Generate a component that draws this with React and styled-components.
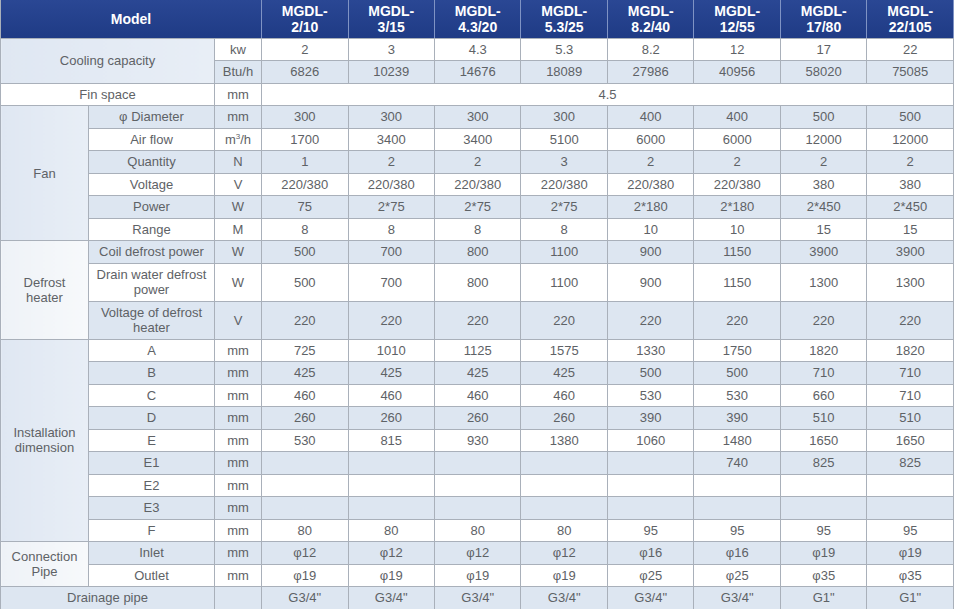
import React from "react";
import styled, { createGlobalStyle } from "styled-components";

// STYLED COMPONENTS -start

const Global = createGlobalStyle`
  html, body {
    margin: 0;
    padding: 0;
    background: #ffffff;
  }
`;

const Sheet = styled.table`
  width: 954px;
  table-layout: fixed;
  border-collapse: collapse;
  font-family: "Liberation Sans", Arial, sans-serif;
  font-size: 13px;
  color: #5e6266;
  text-align: center;
`;

const HeadRow = styled.tr`
  height: 38px;
  background: linear-gradient(#2a4794, #1f3b85);
`;

const HeadCell = styled.th`
  padding: 0;
  color: #ffffff;
  font-size: 14px;
  font-weight: bold;
  line-height: 16px;
  border: 1px solid #a9b0ba;
  border-top: none;
  border-left-color: #7f93c4;
  border-right-color: #7f93c4;
  &:first-child {
    border-left-color: #a9b0ba;
  }
`;

const Row = styled.tr`
  height: ${(p) => (p.$tall ? "38px" : "22.5px")};
  background: ${(p) => (p.$shade ? "#dde6f1" : "#ffffff")};
`;

const Cell = styled.td`
  padding: 0 2px;
  line-height: 15px;
  border: 1px solid #a9b0ba;
  sup {
    font-size: 8px;
    line-height: 0;
    vertical-align: 5px;
  }
`;

const GroupCell = styled(Cell)`
  background: ${(p) =>
    p.$tone === "light"
      ? "linear-gradient(90deg, #eef2f7, #f7f9fb)"
      : "linear-gradient(90deg, #dfe7f2, #e8eef6)"};
`;

// STYLED COMPONENTS -end

const models = ["2/10", "3/15", "4.3/20", "5.3/25", "8.2/40", "12/55", "17/80", "22/105"];

const rep = (v, n = 8) => Array(n).fill(v);

const rows = [
  { group: { text: "Cooling capacity", span: 2, cols: 2 }, unit: "kw", values: [2, 3, 4.3, 5.3, 8.2, 12, 17, 22] },
  { unit: "Btu/h", values: [6826, 10239, 14676, 18089, 27986, 40956, 58020, 75085] },
  { wide: "Fin space", unit: "mm", single: "4.5" },
  { group: { text: "Fan", span: 6 }, label: "φ Diameter", unit: "mm", values: [300, 300, 300, 300, 400, 400, 500, 500] },
  { label: "Air flow", unit: <>m<sup>3</sup>/h</>, values: [1700, 3400, 3400, 5100, 6000, 6000, 12000, 12000] },
  { label: "Quantity", unit: "N", values: [1, 2, 2, 3, 2, 2, 2, 2] },
  { label: "Voltage", unit: "V", values: [...rep("220/380", 6), 380, 380] },
  { label: "Power", unit: "W", values: [75, "2*75", "2*75", "2*75", "2*180", "2*180", "2*450", "2*450"] },
  { label: "Range", unit: "M", values: [8, 8, 8, 8, 10, 10, 15, 15] },
  { group: { text: <>Defrost<br />heater</>, span: 3, tone: "light" }, label: "Coil defrost power", unit: "W", values: [500, 700, 800, 1100, 900, 1150, 3900, 3900] },
  { label: <>Drain water defrost<br />power</>, unit: "W", tall: true, values: [500, 700, 800, 1100, 900, 1150, 1300, 1300] },
  { label: <>Voltage of defrost<br />heater</>, unit: "V", tall: true, values: rep(220) },
  { group: { text: <>Installation<br />dimension</>, span: 9 }, label: "A", unit: "mm", values: [725, 1010, 1125, 1575, 1330, 1750, 1820, 1820] },
  { label: "B", unit: "mm", values: [425, 425, 425, 425, 500, 500, 710, 710] },
  { label: "C", unit: "mm", values: [460, 460, 460, 460, 530, 530, 660, 710] },
  { label: "D", unit: "mm", values: [260, 260, 260, 260, 390, 390, 510, 510] },
  { label: "E", unit: "mm", values: [530, 815, 930, 1380, 1060, 1480, 1650, 1650] },
  { label: "E1", unit: "mm", values: ["", "", "", "", "", 740, 825, 825] },
  { label: "E2", unit: "mm", values: rep("") },
  { label: "E3", unit: "mm", values: rep("") },
  { label: "F", unit: "mm", values: [80, 80, 80, 80, 95, 95, 95, 95] },
  { group: { text: <>Connection<br />Pipe</>, span: 2, tone: "light" }, label: "Inlet", unit: "mm", values: [...rep("φ12", 4), "φ16", "φ16", "φ19", "φ19"] },
  { label: "Outlet", unit: "mm", values: [...rep("φ19", 4), "φ25", "φ25", "φ35", "φ35"] },
  { wide: "Drainage pipe", unit: "", values: [...rep('G3/4"', 6), 'G1"', 'G1"'] },
];

const App = () => {
  return (
    <>
      <Global />
      <Sheet>
        <colgroup>
          <col style={{ width: 88 }} />
          <col style={{ width: 126 }} />
          <col style={{ width: 47 }} />
          {models.map((m) => (
            <col key={m} />
          ))}
        </colgroup>
        <thead>
          <HeadRow>
            <HeadCell colSpan={3}>Model</HeadCell>
            {models.map((m) => (
              <HeadCell key={m}>
                MGDL-
                <br />
                {m}
              </HeadCell>
            ))}
          </HeadRow>
        </thead>
        <tbody>
          {rows.map((r, i) => (
            <Row key={i} $shade={i % 2 === 1} $tall={r.tall}>
              {r.group && (
                <GroupCell rowSpan={r.group.span} colSpan={r.group.cols || 1} $tone={r.group.tone}>
                  {r.group.text}
                </GroupCell>
              )}
              {r.wide && <Cell colSpan={2}>{r.wide}</Cell>}
              {r.label !== undefined && <Cell>{r.label}</Cell>}
              <Cell>{r.unit}</Cell>
              {r.single ? (
                <Cell colSpan={8}>{r.single}</Cell>
              ) : (
                r.values.map((v, j) => <Cell key={j}>{v}</Cell>)
              )}
            </Row>
          ))}
        </tbody>
      </Sheet>
    </>
  );
};

export default App;
